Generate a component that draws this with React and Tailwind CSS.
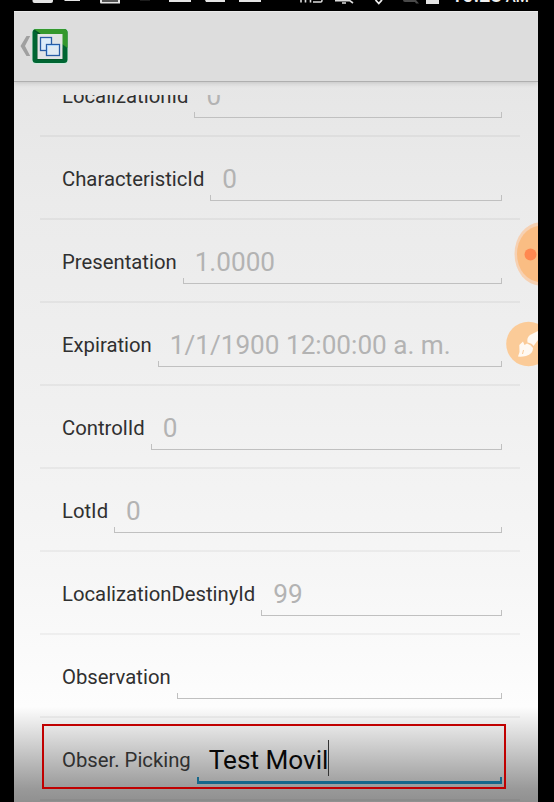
const fields = [
  { label: 'LocalizationId', value: '0' },
  { label: 'CharacteristicId', value: '0' },
  { label: 'Presentation', value: '1.0000' },
  { label: 'Expiration', value: '1/1/1900 12:00:00 a. m.' },
  { label: 'ControlId', value: '0' },
  { label: 'LotId', value: '0' },
  { label: 'LocalizationDestinyId', value: '99' },
  { label: 'Observation', value: '' },
  { label: 'Obser. Picking', value: 'Test Movil', active: true },
];

function StatusBar() {
  return (
    <div className="relative h-[11px] shrink-0 overflow-hidden bg-black">
      <svg className="block" width="554" height="11" viewBox="0 0 554 11">
        <g fill="#e4e4e4">
          <path d="M32.500 0H53V1Q53 3 51 3H34.500Q32.500 3 32.500 1Z" />
          <path d="M64.500 0H80V1H64.500Z" />
          <path d="M100 0H120V3.500H101Q100 3.500 100 2Z" />
          <rect x="169" y="0" width="22" height="2" />
          <path d="M205 0H225V2H206Z" />
          <rect x="239" y="0" width="22" height="2" />
          <rect x="426" y="0" width="13" height="4" />
        </g>
        <rect x="102" y="0" width="16" height="2" fill="#555" />
        <rect x="140" y="0" width="10" height="1" fill="#1c1c1c" />
        <path d="M403 0H416L419 3.500H416L415 2H405Q403 2 403 0Z" fill="#494949" />
        <path d="M301 0V2.500M305.500 0V2.500M310.500 0V2.500M313 2H321Q322 2 322 0" fill="none" stroke="#ddd" strokeWidth="1.600" />
        <path d="M335 .8H350L353 3M342 3H346" fill="none" stroke="#ddd" strokeWidth="1.600" />
        <path d="M375.500 0L378.800 3.500L382 0" fill="none" stroke="#eee" strokeWidth="1.800" />
      </svg>
      <span className="absolute left-[451px] top-[-15px] whitespace-nowrap text-[20px] font-medium leading-[20px] text-[#f0f0f0]">
        10:28 <span className="-ml-px text-[15px]">AM</span>
      </span>
    </div>
  );
}

function AppBar() {
  return (
    <header className="relative z-10 flex h-[71px] shrink-0 items-start border-b border-t border-b-[#afafaf] border-t-[#eaeaea] bg-[#dddddd] pl-1.5 shadow-[0_1px_5px_rgba(0,0,0,0.16)]">
      <svg width="50" height="40" viewBox="20 26 50 40" className="mt-[14px]">
        <path d="M26.500 36H30.200L25 46L30.200 56H26.500L20.500 46Z" fill="#a0a0a0" />
        <rect x="32" y="28.500" width="36" height="35.500" rx="4" fill="#c9eadb" />
        <rect x="32.500" y="29" width="35" height="34" rx="3.500" fill="#006532" />
        <path d="M34 29H64Q67.500 29 67.500 33V48L62 44V34H41Z" fill="#35982d" />
        <path d="M34 30.500L40 34H37.500V59H62.500V48" fill="none" stroke="#064c22" strokeWidth="1" />
        <rect x="37.500" y="34" width="25" height="25" fill="#e2e4e5" />
        <rect x="40.500" y="37.500" width="11" height="13" fill="#dcecf9" stroke="#285ca5" strokeWidth="1.300" />
        <rect x="46.500" y="44.500" width="13" height="11" fill="#e0eaf2" stroke="#285ca5" strokeWidth="1.300" />
        <path d="M47.500 54.500V45.500H58.500" fill="none" stroke="#a9d5ff" />
      </svg>
    </header>
  );
}

function Field({ label, value, active }) {
  return (
    <div className="relative flex h-[83px] shrink-0 border-b-2 border-black/[0.045] pl-[22px] pr-[18px]">
      <label className="mr-1.5 whitespace-nowrap pt-[30px] text-[20.300px] leading-6 text-[#303030]">{label}</label>
      <div className="relative flex-1">
        <div className={active
          ? 'absolute inset-x-0 top-[59px] h-[7px] border-x-2 border-b-[3px] border-[#16678a]'
          : 'absolute inset-x-0 top-[58px] h-1.5 border-x border-b border-[#c0c0c0]'} />
        <div className={active
          ? 'flex items-center pl-3 pt-6 text-[26.150px] leading-9 text-[#080808]'
          : 'flex items-center pl-3 pt-6 text-[26.150px] leading-9 text-[#b3b3b3]'}>
          <span className="whitespace-nowrap">{value}</span>
          {active && <span className="-mt-1 h-9 w-px bg-[#333]" />}
        </div>
      </div>
      {active && <div className="absolute left-[2px] top-[6px] h-[65px] w-[464px] border-2 border-[#c00000]" />}
    </div>
  );
}

function FloatingTools() {
  return (
    <svg className="absolute right-0 top-[220px]" width="36" height="150" viewBox="502 220 36 150">
      <ellipse cx="540" cy="254" rx="25.500" ry="31.500" fill="#f6d1b3" />
      <ellipse cx="540" cy="254" rx="23" ry="28" fill="#fabd83" />
      <circle cx="530.500" cy="254.500" r="6" fill="#ff8850" />
      <circle cx="528.500" cy="344" r="22.300" fill="#fbcb98" />
      <path d="M518 356.500L519.500 352L519.300 345L523 341.500L524.500 345L527 343.500Q531 344.500 533 348Q533 354 526 356Q521 357 518 356.500Z" fill="#fff9f2" />
      <path d="M527.500 342.500Q526.500 337.500 530 335L538 331V340L533.500 346Q532 343 527.500 342.500Z" fill="#fff9f2" />
      <path d="M523.500 350L522.500 354" stroke="#fbcb98" strokeWidth="1" />
    </svg>
  );
}

export default function App() {
  return (
    <div className="flex h-[802px] w-[554px] flex-col overflow-hidden bg-black font-[Roboto,sans-serif]">
      <StatusBar />
      <div className="relative mx-[14px] mr-4 flex min-h-0 flex-1 flex-col overflow-hidden">
        <AppBar />
        <main className="min-h-0 flex-1 bg-[linear-gradient(to_bottom,#e6e6e6_0px,#ebebeb_120px,#f0f0f0_320px,#f6f6f6_490px,#fdfdfd_625px,#e7e7e7_643px,#bababa_680px,#999999_707px,#909090_720px)] pt-[13px]">
          <div className="h-[707px] overflow-hidden pl-[26px] pr-[18px]">
            <div className="-mt-[41px] flex flex-col">
              {fields.map((field) => <Field key={field.label} {...field} />)}
            </div>
          </div>
        </main>
      </div>
      <div className="pointer-events-none absolute left-0 top-0 h-[802px] w-[538px]">
        <FloatingTools />
      </div>
    </div>
  );
}
